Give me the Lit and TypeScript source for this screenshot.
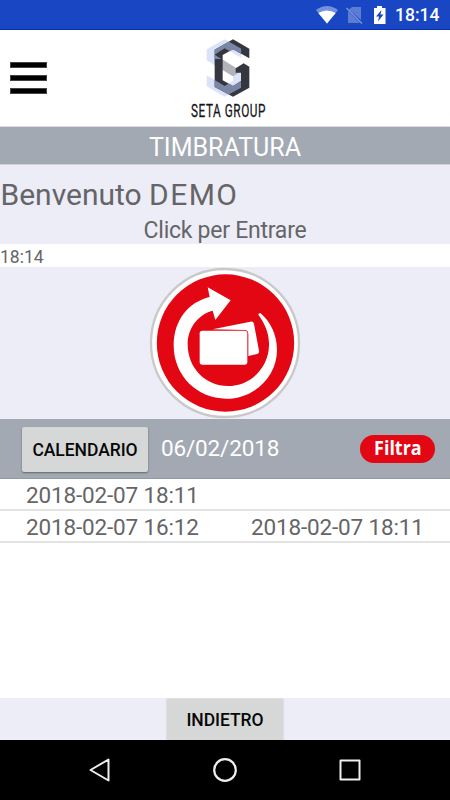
import { LitElement, html, css, svg } from "lit";
import { customElement } from "lit/decorators.js";

const entries: [string, string][] = [
  ["2018-02-07 18:11", ""],
  ["2018-02-07 16:12", "2018-02-07 18:11"],
];

const S_SHAPE =
  "M133 27L183 55V82L133 54L103 73L182 122V172L133 199L79 168V135L133 167L158 152V138L79 90V57Z";
const G_SHAPE =
  "M158 27L207 55V84L158 57L127 74V150L158 167L182 152V127H166V114L190 99L207 109V172L158 199L103 170V58Z";

@customElement("seta-logo")
class SetaLogo extends LitElement {
  static styles = css`
    :host { display: flex; flex-direction: column; align-items: center; }
    svg { display: block; width: 44px; height: 58px; }
    .name {
      font: 400 19px/20px "Roboto", sans-serif;
      letter-spacing: 0.9px;
      color: #15161c;
      white-space: nowrap;
      width: 74px;
      display: flex;
      justify-content: center;
      margin-top: 4px;
    }
    .name span { transform: scaleX(0.62); -webkit-text-stroke: 0.3px #15161c; }
  `;
  render() {
    return html`
      <svg viewBox="77 26 132 174">
        <defs>
          <clipPath id="s"><path d=${S_SHAPE} /></clipPath>
          <clipPath id="ends"><path d="M70 20H210V86H70ZM70 140H210V202H70Z" /></clipPath>
        </defs>
        <path fill="#dce2f8" d=${S_SHAPE} />
        <path fill="#b1b3b9" d="M103 73L182 122L158 138L103 105Z" />
        <path fill="#343640" d=${G_SHAPE} />
        <g clip-path="url(#ends)"><path fill="#7b86a7" clip-path="url(#s)" d=${G_SHAPE} /></g>
      </svg>
      <div class="name"><span>SETA GROUP</span></div>
    `;
  }
}

@customElement("app-root")
class AppRoot extends LitElement {
  static styles = css`
    :host {
      display: flex; flex-direction: column; width: 450px; height: 800px; overflow: hidden;
      background: #fff; font-family: "Roboto", sans-serif; color: #656567;
    }
    * { box-sizing: border-box; }
    svg { display: block; }
    .status {
      height: 30px; flex: none; background: #1946c2; border-bottom: 1px solid #0a2fae;
      display: flex; align-items: center; justify-content: flex-end; padding-right: 10px;
      color: #fff; font-size: 17.5px; font-weight: 500; line-height: 30px;
    }
    .status span { width: 45px; padding-top: 1px; }
    .header {
      height: 97px; flex: none; display: grid; grid-template-columns: 1fr 80px 1fr;
      border-bottom: 1px solid #dcdee2;
    }
    .menu { margin: 32px 0 0 10px; display: flex; flex-direction: column; gap: 7px; }
    .menu i { display: block; width: 37px; height: 6px; background: #000; border: 0.5px solid #444; }
    seta-logo { margin-top: 9px; margin-left: 6px; }
    .title {
      height: 37px; flex: none; background: #a2a9b3; color: #fff; text-align: center;
      font-size: 25px; line-height: 41px;
    }
    .welcome { height: 80px; flex: none; background: #ededf7; border-top: 1px solid #cfd2da; }
    .hello { font-size: 30px; line-height: 36px; padding: 12px 0 0 0.500px; white-space: pre; }
    .hello span { letter-spacing: 1.4px; }
    .hint { font-size: 23px; line-height: 30px; text-align: center; margin-top: 3px; letter-spacing: -0.25px; }
    .time { height: 23px; flex: none; font-size: 17.5px; line-height: 26px; }
    .stamp {
      height: 152px; flex: none; background: #ededf7; display: flex; justify-content: center;
    }
    .filter {
      height: 60px; flex: none; background: #a2a9b3; border-bottom: 1px solid #9299a5;
      display: flex; align-items: flex-start; color: #fff; padding: 8px 15px 0 22px;
    }
    .btn {
      background: #d6d8d7; color: #070707; font-weight: 500; font-size: 17.5px; letter-spacing: -0.05px;
      display: flex; align-items: center; justify-content: center;
    }
    .cal { width: 126px; height: 45px; border-radius: 2px; box-shadow: 0 1px 2px #0006; padding-top: 1px; }
    .date { font-size: 22.5px; line-height: 42px; margin-left: 13px; letter-spacing: -0.15px; }
    .go {
      margin: 8px 0 0 auto; width: 75px; height: 28px; border-radius: 14px; background: #e30613;
      font: 700 19.5px/26px "Open Sans", sans-serif; display: flex; justify-content: center;
    }
    .go span { transform: scaleX(0.92); }
    .row {
      flex: none; height: 32px; border-bottom: 2px solid #e2e2e2; display: grid;
      grid-template-columns: 225px 225px; font-size: 22.5px; line-height: 32px; letter-spacing: -0.15px;
    }
    .row span { padding-left: 26px; }
    .bottom {
      margin-top: auto; height: 42px; flex: none; background: #ededf7; display: flex;
      justify-content: center; padding: 1px 0 0 0;
    }
    .back { width: 116px; box-shadow: 0 0 2px #0003; padding-top: 1px; }
    .nav {
      height: 60px; flex: none; background: #000; display: grid;
      grid-template-columns: repeat(3, 125px); justify-content: center; place-items: center;
    }
  `;

  stampIcon() {
    return html`<svg width="152" height="152" viewBox="27 22 456 456">
      ${svg`
      <circle cx="255" cy="250" r="222" fill="#fff" stroke="#c9c9c9" stroke-width="7" />
      <circle cx="256.500" cy="250" r="206" fill="#e30613" />
      <path fill="#fff" d="M203 83L272 122L226 181L218 153C175 164 143 205 143 253C143 325 196 379 264 379C330 379 386 326 387 257C388 222 375 192 355 165Q355 159 362 161C392 187 411 226 411 270C411 351 343 417 259 417C170 417 101 347 101 257C101 181 146 127 209 112Z" />
      <path fill="#fff" d="M218 209L331 186Q340 184 342 193L357 273Q359 281 351 283L325 289V224Q325 211 313 211Z" />
      <rect x="179" y="213" width="143" height="102" rx="8" fill="#fff" />`}
    </svg>`;
  }

  render() {
    return html`
      <div class="status">
        <svg width="84" height="30" viewBox="312 0 84 30">
          <path fill="#7590dc" d="M317 10Q328 2 339 10L328 23.500Z" />
          <path fill="#fff" d="M319.300 13Q328 8 336.700 13L328 23.500Z" />
          <path fill="#5d7dd5" d="M353 7H362V20L350 9.500ZM349 11L361 23H349Z" />
          <path stroke="#7894df" stroke-width="1.500" d="M347.500 8L363 23.500" />
          <path fill="#fff" d="M375 8H378V6H383V8H386.500V24H375Z" />
          <path fill="#1946c2" d="M382.500 10L377 16.500H380L379 21.500L384.500 14.500H381.500Z" />
        </svg>
        <span>18:14</span>
      </div>
      <div class="header">
        <div class="menu"><i></i><i></i><i></i></div>
        <seta-logo></seta-logo>
      </div>
      <div class="title">TIMBRATURA</div>
      <div class="welcome">
        <div class="hello">Benvenuto <span>DEMO</span></div>
        <div class="hint">Click per Entrare</div>
      </div>
      <div class="time">18:14</div>
      <div class="stamp">${this.stampIcon()}</div>
      <div class="filter">
        <div class="btn cal">CALENDARIO</div>
        <div class="date">06/02/2018</div>
        <div class="go"><span>Filtra</span></div>
      </div>
      ${entries.map(([a, b]) => html`<div class="row"><span>${a}</span><span>${b}</span></div>`)}
      <div class="bottom"><div class="btn back">INDIETRO</div></div>
      <div class="nav">
        <svg width="24" height="26" fill="none" stroke="#eee" stroke-width="2" stroke-linejoin="round"><path d="M2.500 13L20.500 2.500V23.500Z" /></svg>
        <svg width="26" height="26" fill="none" stroke="#eee" stroke-width="2.200"><circle cx="13" cy="13" r="10.800" /></svg>
        <svg width="24" height="24" fill="none" stroke="#eee" stroke-width="2" stroke-linejoin="round"><rect x="2.500" y="2.500" width="19" height="19" /></svg>
      </div>
    `;
  }
}
